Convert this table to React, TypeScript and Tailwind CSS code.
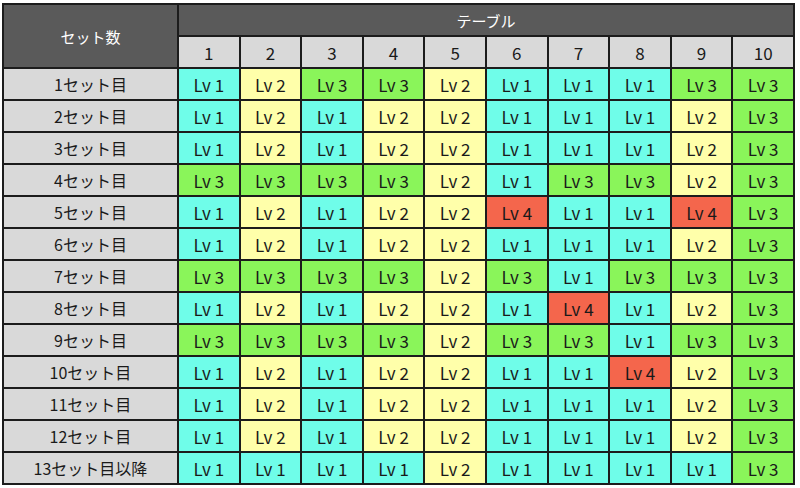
const rows: { label: string; lv: number[] }[] = [
  { label: "1セット目", lv: [1, 2, 3, 3, 2, 1, 1, 1, 3, 3] },
  { label: "2セット目", lv: [1, 2, 1, 2, 2, 1, 1, 1, 2, 3] },
  { label: "3セット目", lv: [1, 2, 1, 2, 2, 1, 1, 1, 2, 3] },
  { label: "4セット目", lv: [3, 3, 3, 3, 2, 1, 3, 3, 2, 3] },
  { label: "5セット目", lv: [1, 2, 1, 2, 2, 4, 1, 1, 4, 3] },
  { label: "6セット目", lv: [1, 2, 1, 2, 2, 1, 1, 1, 2, 3] },
  { label: "7セット目", lv: [3, 3, 3, 3, 2, 3, 1, 3, 3, 3] },
  { label: "8セット目", lv: [1, 2, 1, 2, 2, 1, 4, 1, 2, 3] },
  { label: "9セット目", lv: [3, 3, 3, 3, 2, 3, 3, 1, 3, 3] },
  { label: "10セット目", lv: [1, 2, 1, 2, 2, 1, 1, 4, 2, 3] },
  { label: "11セット目", lv: [1, 2, 1, 2, 2, 1, 1, 1, 2, 3] },
  { label: "12セット目", lv: [1, 2, 1, 2, 2, 1, 1, 1, 2, 3] },
  { label: "13セット目以降", lv: [1, 1, 1, 1, 2, 1, 1, 1, 1, 3] },
];

const lvColor: Record<number, string> = {
  1: "bg-[#6ffde9]",
  2: "bg-[#ffffaa]",
  3: "bg-[#8af55a]",
  4: "bg-[#f4664c]",
};

const cols = [1, 2, 3, 4, 5, 6, 7, 8, 9, 10];

export default function App() {
  return (
    <div
      className="min-h-screen bg-white pl-[2px] pt-[3px] text-[#1a1a1a]"
      style={{ fontFamily: '"Noto Sans CJK JP", "Noto Sans", sans-serif' }}
    >
      <table className="w-[793px] table-fixed border-collapse text-[16px] leading-none">
        <colgroup>
          <col className="w-[175px]" />
          {cols.map((c) => (
            <col key={c} />
          ))}
        </colgroup>
        <thead>
          <tr className="h-[32px]">
            <th
              rowSpan={2}
              className="border-2 border-[#1c1c1c] bg-[#5a5a5a] text-[15px] font-normal text-white"
            >
              セット数
            </th>
            <th
              colSpan={10}
              className="border-2 border-[#1c1c1c] bg-[#5a5a5a] text-[15px] font-normal text-white"
            >
              テーブル
            </th>
          </tr>
          <tr className="h-[32px]">
            {cols.map((c) => (
              <th
                key={c}
                className="border-2 border-[#1c1c1c] bg-[#d9d9d9] text-[17px] font-normal"
              >
                {c}
              </th>
            ))}
          </tr>
        </thead>
        <tbody>
          {rows.map((r) => (
            <tr key={r.label} className="h-[32px]">
              <td className="border-2 border-[#1c1c1c] bg-[#d9d9d9] text-center">
                {r.label}
              </td>
              {r.lv.map((v, i) => (
                <td
                  key={i}
                  className={`border-2 border-[#1c1c1c] text-center text-[17px] ${lvColor[v]}`}
                >
                  Lv {v}
                </td>
              ))}
            </tr>
          ))}
        </tbody>
      </table>
    </div>
  );
}
